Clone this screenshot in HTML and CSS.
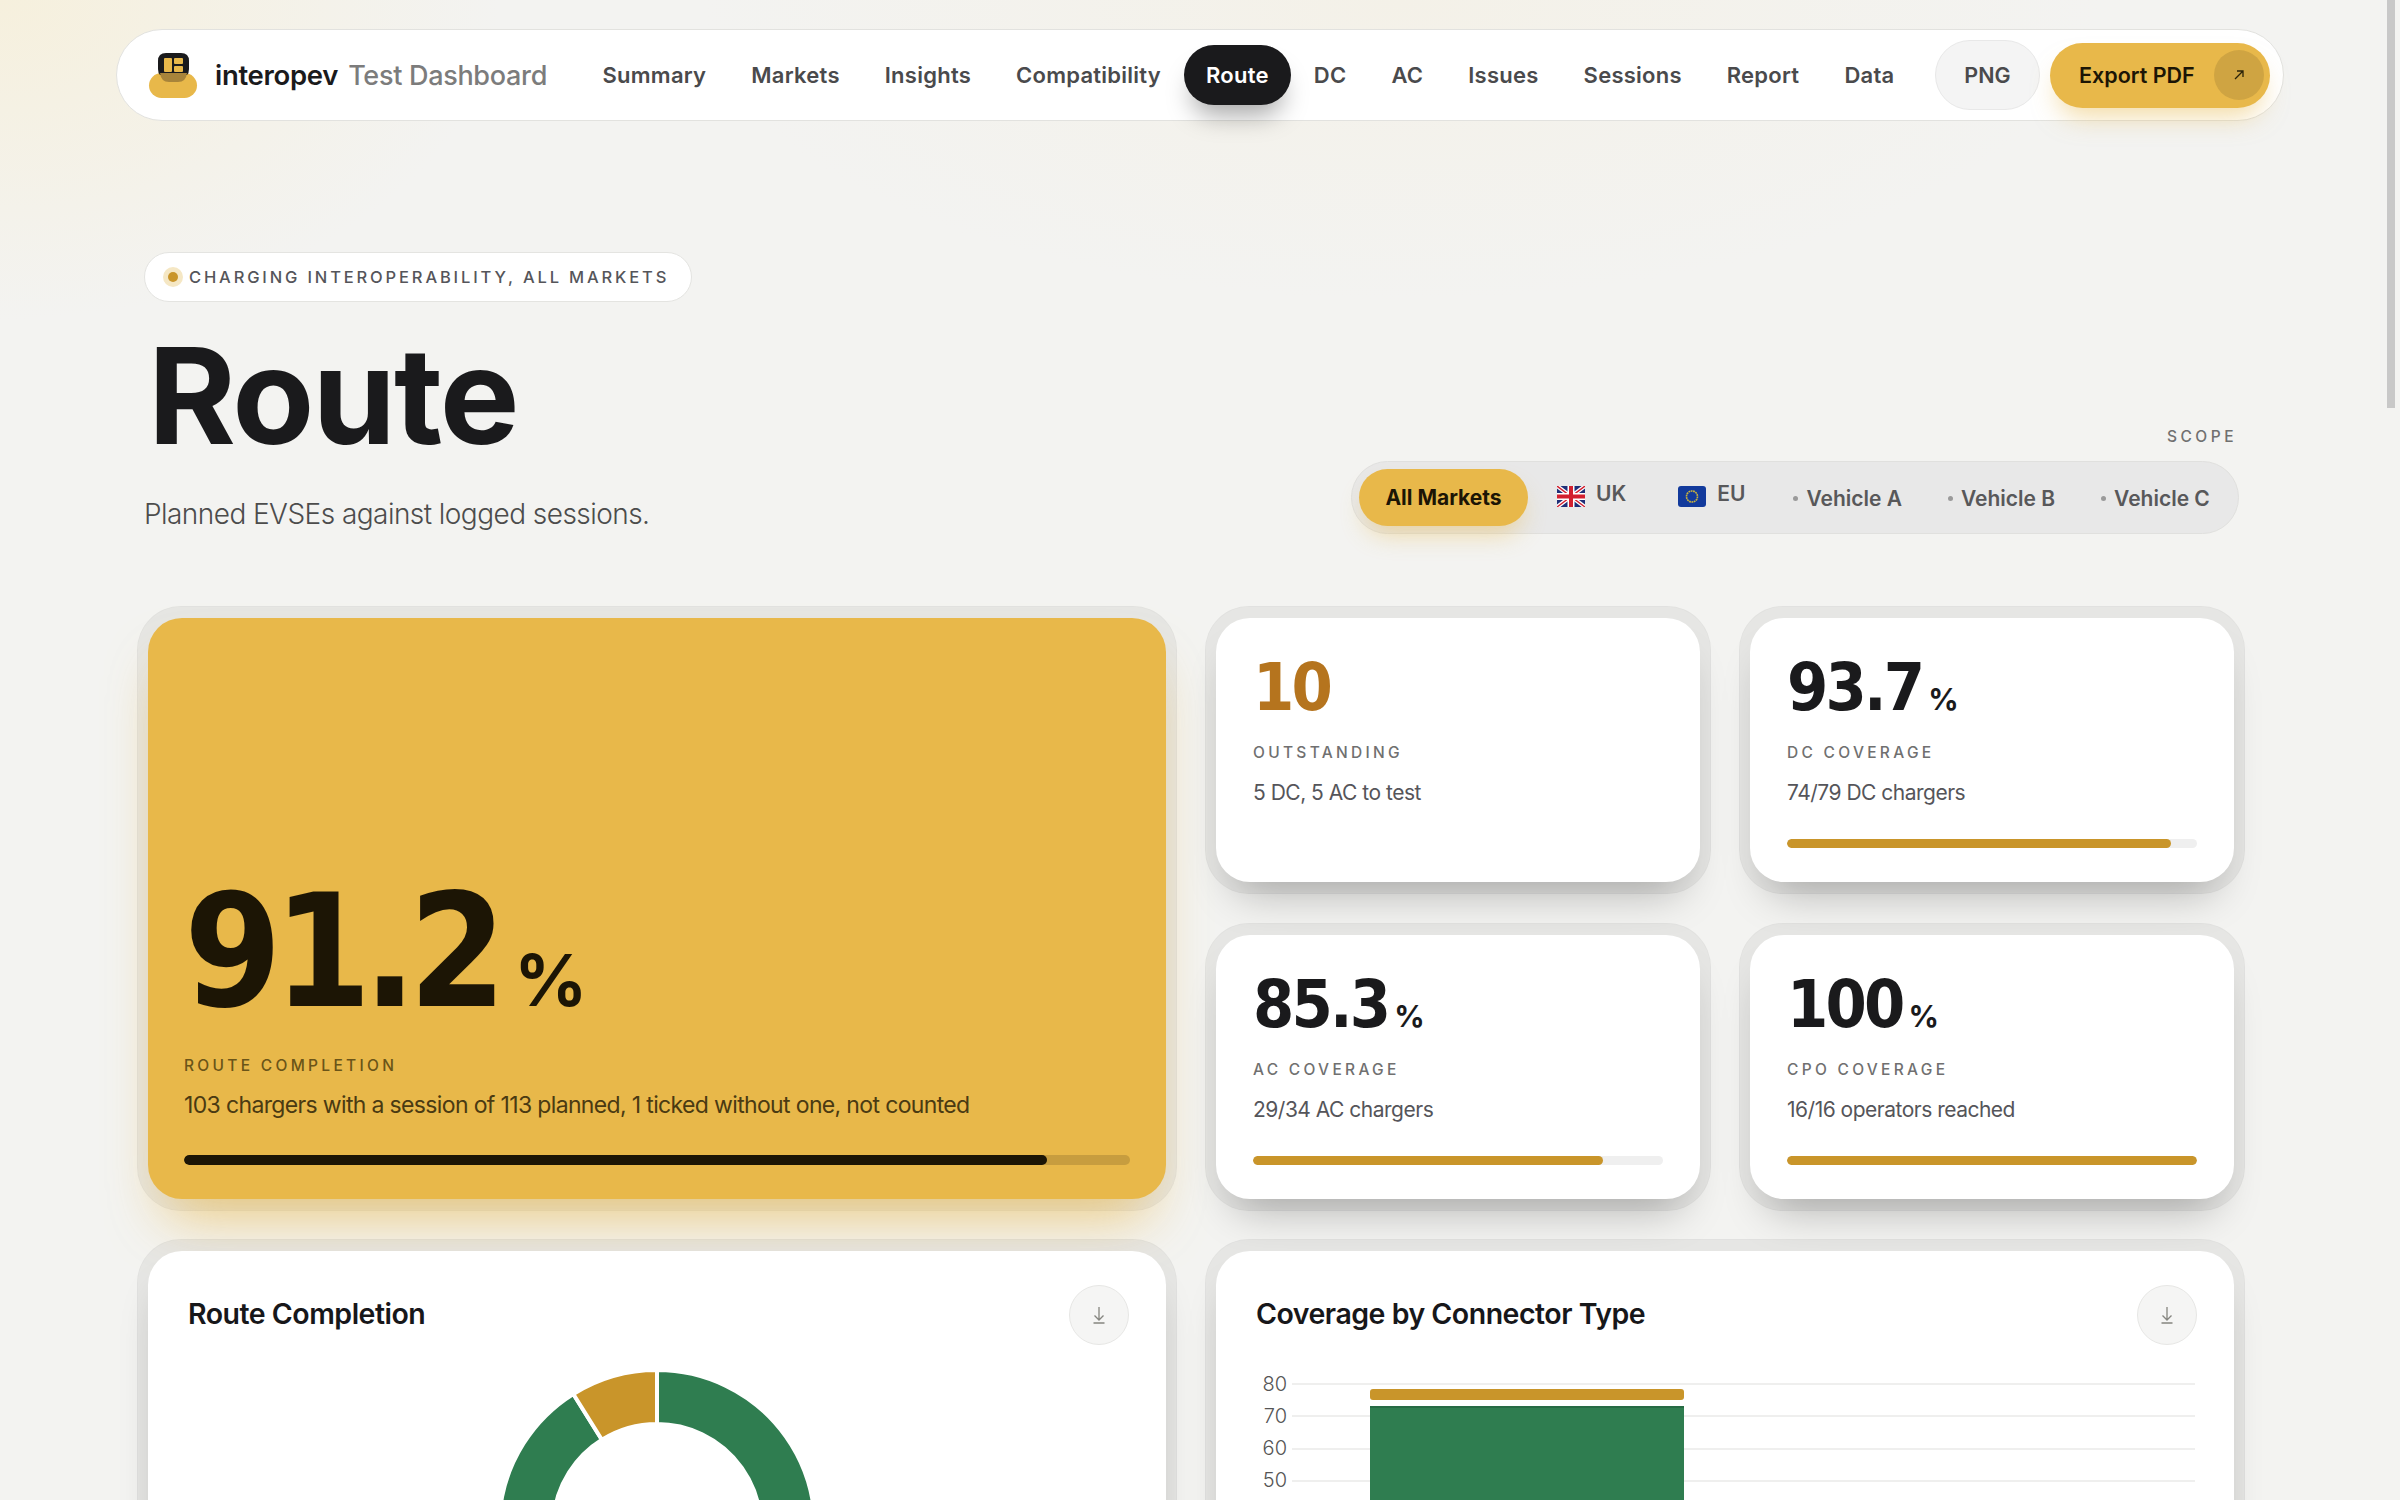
FILE: index.html
```html
<!DOCTYPE html>
<html lang="en">
<head>
    <meta charset="UTF-8">
    <meta name="viewport" content="width=device-width, initial-scale=1.0">
    <title>interopev Test Dashboard</title>
    <link rel="stylesheet" href="styles.css">
</head>
<body>
    <div class="scroll-thumb"></div>

    <header class="navbar">
        <div class="brand">
            <svg class="brand-logo" width="52" height="52" viewBox="0 0 52 52">
                <rect class="logo-base" x="2" y="24" width="48" height="25" rx="12.500"/>
                <path d="M19 4h15q8 0 8 8v8q0 4-2 6H13q-2-2-2-6v-8q0-8 8-8z" fill="#1a1a1c"/>
                <path d="M13 24h27q-1 9-9 9H22q-8 0-9-9z" fill="#a8843a"/>
                <rect x="17" y="9" width="8" height="14" rx="1" fill="#e8b84a"/>
                <rect x="27" y="9" width="9" height="6" rx="1" fill="#e8b84a"/>
                <rect x="27" y="17" width="9" height="6" rx="1" fill="#e8b84a"/>
            </svg>
            <span class="brand-name">interopev</span>
            <span class="brand-sub">Test Dashboard</span>
        </div>
        <nav class="nav-links">
            <a>Summary</a>
            <a>Markets</a>
            <a>Insights</a>
            <a>Compatibility</a>
            <a class="active">Route</a>
            <a>DC</a>
            <a>AC</a>
            <a>Issues</a>
            <a>Sessions</a>
            <a>Report</a>
            <a>Data</a>
        </nav>
        <button class="btn-png">PNG</button>
        <button class="btn-export">
            <span>Export PDF</span>
            <span class="export-arrow">
                <svg width="14" height="14" viewBox="0 0 14 14"><path d="M3 11 11 3M5 3h6v6" fill="none" stroke="#2a2208" stroke-width="1.3"/></svg>
            </span>
        </button>
    </header>

    <main class="container">
        <div class="page-head">
            <div class="title-block">
                <div class="eyebrow"><span class="eyebrow-dot"></span>CHARGING INTEROPERABILITY, ALL MARKETS</div>
                <h1>Route</h1>
                <p class="subtitle">Planned EVSEs against logged sessions.</p>
            </div>
            <div class="scope">
                <div class="scope-label">SCOPE</div>
                <div class="scope-bar">
                    <a class="scope-item active">All Markets</a>
                    <a class="scope-item flag-item">
                        <svg class="flag" width="28" height="21" viewBox="0 0 28 21">
                            <rect width="28" height="21" fill="#1f2f78"/>
                            <path d="M0 0 28 21M28 0 0 21" stroke="#fff" stroke-width="4"/>
                            <path d="M0 0 28 21M28 0 0 21" stroke="#d3202f" stroke-width="1.4"/>
                            <path d="M14 0v21M0 10.5h28" stroke="#fff" stroke-width="7"/>
                            <path d="M14 0v21M0 10.5h28" stroke="#d3202f" stroke-width="4"/>
                        </svg>
                        UK
                    </a>
                    <a class="scope-item flag-item">
                        <svg class="flag" width="28" height="21" viewBox="0 0 28 21">
                            <rect width="28" height="21" rx="3" fill="#123a9c"/>
                            <circle cx="14" cy="10.5" r="5.5" fill="none" stroke="#c9b23c" stroke-width="1.6" stroke-dasharray="1.8 0.6"/>
                        </svg>
                        EU
                    </a>
                    <a class="scope-item vehicle"><span class="scope-dot"></span>Vehicle A</a>
                    <a class="scope-item vehicle"><span class="scope-dot"></span>Vehicle B</a>
                    <a class="scope-item vehicle"><span class="scope-dot"></span>Vehicle C</a>
                </div>
            </div>
        </div>

        <section class="two-col">
            <div class="ring">
                <div class="card hero-card">
                    <div class="hero-value">91.2<span class="unit">%</span></div>
                    <div class="stat-label">ROUTE COMPLETION</div>
                    <div class="stat-desc">103 chargers with a session of 113 planned, 1 ticked without one, not counted</div>
                    <div class="bar"><div class="bar-fill" style="width: 91.2%"></div></div>
                </div>
            </div>

            <div class="stat-grid">
                <div class="ring">
                    <div class="card stat-card">
                        <div class="stat-value outstanding">10</div>
                        <div class="stat-label">OUTSTANDING</div>
                        <div class="stat-desc">5 DC, 5 AC to test</div>
                    </div>
                </div>
                <div class="ring">
                    <div class="card stat-card">
                        <div class="stat-value">93.7<span class="unit">%</span></div>
                        <div class="stat-label">DC COVERAGE</div>
                        <div class="stat-desc">74/79 DC chargers</div>
                        <div class="bar"><div class="bar-fill" style="width: 93.7%"></div></div>
                    </div>
                </div>
                <div class="ring">
                    <div class="card stat-card">
                        <div class="stat-value">85.3<span class="unit">%</span></div>
                        <div class="stat-label">AC COVERAGE</div>
                        <div class="stat-desc">29/34 AC chargers</div>
                        <div class="bar"><div class="bar-fill" style="width: 85.3%"></div></div>
                    </div>
                </div>
                <div class="ring">
                    <div class="card stat-card">
                        <div class="stat-value">100<span class="unit">%</span></div>
                        <div class="stat-label">CPO COVERAGE</div>
                        <div class="stat-desc">16/16 operators reached</div>
                        <div class="bar"><div class="bar-fill" style="width: 100%"></div></div>
                    </div>
                </div>
            </div>
        </section>

        <section class="two-col charts">
            <div class="ring">
                <div class="card chart-card">
                    <div class="chart-head">
                        <h2>Route Completion</h2>
                        <button class="btn-download">
                            <svg width="16" height="20" viewBox="0 0 16 20"><path d="M8 2v13M3.5 10.5 8 15l4.500-4.500M2.500 18h11" fill="none" stroke="#85857f" stroke-width="1.300"/></svg>
                        </button>
                    </div>
                    <div class="donut-wrap">
                        <svg width="320" height="320" viewBox="-160 -158 320 320">
                            <path d="M0 -158A158 158 0 1 1 -83.700 -134L-55.100 -88.200A104 104 0 1 0 0 -104Z" fill="#2f7d50" stroke="#fff" stroke-width="4"/>
                            <path d="M-83.700 -134A158 158 0 0 1 0 -158L0 -104A104 104 0 0 0 -55.100 -88.200Z" fill="#c9952a" stroke="#fff" stroke-width="4"/>
                        </svg>
                    </div>
                </div>
            </div>
            <div class="ring">
                <div class="card chart-card">
                    <div class="chart-head">
                        <h2>Coverage by Connector Type</h2>
                        <button class="btn-download">
                            <svg width="16" height="20" viewBox="0 0 16 20"><path d="M8 2v13M3.5 10.5 8 15l4.500-4.500M2.500 18h11" fill="none" stroke="#85857f" stroke-width="1.300"/></svg>
                        </button>
                    </div>
                    <svg class="bar-chart" width="940" height="140" viewBox="0 0 940 140">
                        <g class="grid-lines">
                            <path d="M36 14H939M36 46H939M36 79H939M36 111H939"/>
                        </g>
                        <g class="axis-labels">
                            <text x="31" y="21">80</text>
                            <text x="31" y="53">70</text>
                            <text x="31" y="85">60</text>
                            <text x="31" y="117">50</text>
                        </g>
                        <rect x="114" y="19" width="314" height="11" rx="3" fill="#c9952a"/>
                        <rect x="114" y="36" width="314" height="104" fill="#2f7d50"/>
                        <rect x="114" y="36" width="314" height="2" fill="#276b44"/>
                    </svg>
                </div>
            </div>
        </section>
    </main>
</body>
</html>
```

FILE: styles.css
```css
html {
    background: #f3f3f1;
}

body {
    margin: 0;
    padding-top: 29px;
    min-height: 5500px;
    font-family: Inter, "Noto Sans", sans-serif;
    color: #1a1a1c;
    background:
        radial-gradient(ellipse 500px 320px at 0 0, #f6f0dd, rgba(246, 240, 221, 0) 100%),
        radial-gradient(ellipse 700px 300px at 1400px 0, #f4f1e8, rgba(244, 241, 232, 0) 100%);
    background-repeat: no-repeat;
}

/* page scroll position */
.scroll-thumb {
    position: fixed;
    top: 0;
    right: 5px;
    width: 8px;
    height: 408px;
    background: #c8c8c8;
}

/* top bar */
.navbar {
    box-sizing: border-box;
    width: 2168px;
    height: 92px;
    margin-left: 116px;
    display: flex;
    align-items: center;
    padding: 0 13px 0 30px;
    background: #fff;
    border: 1px solid #e2e2df;
    border-radius: 46px;
}

.brand {
    display: flex;
    align-items: center;
    width: 433px;
    flex-shrink: 0;
}

.brand-logo {
    margin-right: 16px;
}

.logo-base {
    fill: #e8b84a;
}

.brand-name {
    font-size: 27.5px;
    font-weight: 600;
    letter-spacing: -0.3px;
    margin-right: 10px;
}

.brand-sub {
    font-size: 27px;
    font-weight: 500;
    color: #7c7c7c;
    letter-spacing: -0.3px;
}

.nav-links {
    display: flex;
    align-items: center;
    flex: 1;
}

.nav-links a {
    padding: 0 22.5px;
    height: 60px;
    line-height: 60px;
    font-size: 22px;
    font-weight: 600;
    letter-spacing: 0.25px;
    color: #4a4a4c;
}

.nav-links a.active {
    background: #1a1a1c;
    color: #fff;
    border-radius: 30px;
    box-shadow: 0 18px 26px -8px rgba(0, 0, 0, 0.35);
}

.btn-png {
    box-sizing: border-box;
    width: 105px;
    height: 70px;
    margin-right: 10px;
    background: #f4f4f4;
    border: 1px solid #e8e8e8;
    border-radius: 35px;
    font-family: inherit;
    font-size: 21.5px;
    font-weight: 600;
    color: #4a4a4c;
}

.btn-export {
    box-sizing: border-box;
    width: 220px;
    height: 65px;
    display: flex;
    align-items: center;
    justify-content: space-between;
    padding: 0 6px 0 29px;
    background: #e8b84a;
    border: none;
    border-radius: 33px;
    font-family: inherit;
    font-size: 21.5px;
    font-weight: 600;
    color: #1c1505;
    box-shadow: 0 16px 26px -8px rgba(232, 184, 74, 0.5);
}

.export-arrow {
    width: 50px;
    height: 50px;
    display: flex;
    align-items: center;
    justify-content: center;
    border-radius: 50%;
    background: #cfa442;
}

/* page content */
.container {
    width: 2108px;
    margin-left: 137px;
    padding-top: 131px;
}

.page-head {
    display: flex;
    justify-content: space-between;
    align-items: flex-end;
    height: 354px;
    padding: 0 6px 0 7px;
    box-sizing: border-box;
}

.title-block {
    align-self: flex-start;
}

.eyebrow {
    box-sizing: border-box;
    width: 548px;
    height: 50px;
    display: flex;
    align-items: center;
    padding-left: 17px;
    background: #fff;
    border: 1px solid #e4e4e1;
    border-radius: 25px;
    font-size: 16.5px;
    font-weight: 500;
    letter-spacing: 2.85px;
    color: #55555a;
    white-space: nowrap;
}

.eyebrow-dot {
    width: 10px;
    height: 10px;
    margin-right: 11px;
    border-radius: 50%;
    background: #c9952a;
    box-shadow: 0 0 0 5px #f5e7c4;
    margin-left: 6px;
}

h1 {
    margin: 27px 0 0 4px;
    font-size: 134px;
    line-height: 132px;
    font-weight: 700;
    letter-spacing: -2px;
}

.subtitle {
    margin: 35px 0 0;
    font-size: 28px;
    line-height: 36px;
    font-weight: 300;
    color: #4c4c4c;
    letter-spacing: -0.55px;
}

.scope {
    display: flex;
    flex-direction: column;
    align-items: flex-end;
    margin-bottom: 72px;
}

.scope-label {
    font-size: 15.5px;
    font-weight: 500;
    letter-spacing: 3.5px;
    color: #707070;
    margin: 0 2px 15px 0;
}

.scope-bar {
    box-sizing: border-box;
    width: 888px;
    height: 73px;
    display: flex;
    align-items: center;
    padding-left: 7px;
    background: #e8e8e8;
    border: 1px solid #e0e0de;
    border-radius: 37px;
}

.scope-item {
    font-size: 21px;
    font-weight: 600;
    color: #58585a;
    white-space: nowrap;
}

.scope-item.active {
    box-sizing: border-box;
    width: 169px;
    height: 57px;
    line-height: 57px;
    text-align: center;
    margin-right: 29px;
    background: #e8b84a;
    color: #1c1505;
    font-weight: 700;
    border-radius: 29px;
    box-shadow: 0 14px 24px -6px rgba(232, 184, 74, 0.45);
}

.flag-item {
    display: flex;
    align-items: center;
    gap: 11px;
    margin-bottom: 8px;
    margin-right: 52px;
}

.flag-item + .flag-item {
    margin-right: 48px;
}

.flag {
    position: relative;
    top: 3px;
}

.vehicle {
    display: flex;
    align-items: center;
    margin-top: 2px;
    margin-right: 46px;
}

.vehicle:last-child {
    margin-right: 0;
}

.scope-dot {
    width: 5px;
    height: 5px;
    margin-right: 8px;
    border-radius: 50%;
    background: #9a9a9a;
}

/* cards */
.two-col {
    display: grid;
    grid-template-columns: 1fr 1fr;
    gap: 28px;
}

.charts {
    margin-top: 28px;
}

.stat-grid {
    display: grid;
    grid-template-columns: 1fr 1fr;
    grid-template-rows: 1fr 1fr;
    gap: 29px 28px;
}

.ring {
    box-sizing: border-box;
    display: flex;
    padding: 11px 10px;
    background: rgba(0, 0, 0, 0.05);
    border: 1px solid rgba(0, 0, 0, 0.025);
    border-radius: 44px;
}

.card {
    flex: 1;
    box-sizing: border-box;
    background: #fff;
    border-radius: 34px;
    box-shadow: 0 28px 44px -18px rgba(0, 0, 0, 0.28);
}

.hero-card {
    height: 581px;
    display: flex;
    flex-direction: column;
    justify-content: flex-end;
    padding: 0 36px 34px;
    background: #e8b84a;
    color: #1c1505;
    box-shadow: 0 34px 56px -18px rgba(232, 184, 74, 0.7);
}

.hero-value {
    font-family: "DejaVu Sans Condensed", "DejaVu Sans", sans-serif;
    font-size: 156px;
    line-height: 156px;
    font-weight: 700;
    letter-spacing: -8px;
}

.hero-value .unit {
    font-family: Inter, sans-serif;
    font-size: 72px;
    line-height: 0;
    font-weight: 700;
    letter-spacing: -2px;
    margin-left: 16px;
}

.stat-card {
    height: 264px;
    padding: 30px 37px 0;
}

.stat-value {
    font-family: "DejaVu Sans Condensed", "DejaVu Sans", sans-serif;
    font-size: 66px;
    line-height: 80px;
    font-weight: 700;
    letter-spacing: -2.8px;
}

.stat-value .unit {
    font-family: Inter, sans-serif;
    font-size: 30px;
    line-height: 0;
    font-weight: 700;
    letter-spacing: -1px;
    margin-left: 6px;
}

.stat-value.outstanding {
    color: #b5741e;
}

.stat-label {
    margin-top: 15px;
    font-size: 15.5px;
    line-height: 20px;
    font-weight: 500;
    letter-spacing: 3.3px;
    color: #707070;
}

.stat-desc {
    margin-top: 16px;
    font-size: 21px;
    line-height: 28px;
    color: #55555a;
    letter-spacing: -0.5px;
}

.hero-card .stat-label {
    margin-top: 26px;
    color: #6a5418;
}

.hero-card .stat-desc {
    margin-top: 15px;
    font-size: 23px;
    color: #4a3a12;
    letter-spacing: -0.65px;
}

.bar {
    height: 9px;
    margin-top: 32px;
    background: #efefef;
    border-radius: 5px;
    overflow: hidden;
}

.bar-fill {
    height: 100%;
    background: #c9952a;
    border-radius: 5px;
}

.hero-card .bar {
    height: 10px;
    margin-top: 36px;
    background: rgba(28, 21, 5, 0.16);
}

.hero-card .bar-fill {
    background: #1c1505;
}

.chart-card {
    height: 560px;
    padding: 34px 37px 0 40px;
}

.chart-head {
    display: flex;
    justify-content: space-between;
    align-items: center;
    height: 60px;
    margin-bottom: 25px;
}

h2 {
    margin: 0 0 4px;
    font-size: 28.5px;
    font-weight: 600;
    letter-spacing: -0.5px;
    color: #17171a;
}

.btn-download {
    box-sizing: border-box;
    width: 60px;
    height: 60px;
    display: flex;
    align-items: center;
    justify-content: center;
    padding: 0;
    background: #f5f5f4;
    border: 1px solid #e7e7e5;
    border-radius: 50%;
}

.donut-wrap {
    display: flex;
    justify-content: center;
    margin-left: -3px;
}

.bar-chart {
    display: block;
}

.grid-lines path {
    stroke: #efefee;
    stroke-width: 2;
    fill: none;
}

.axis-labels text {
    font-family: Inter, sans-serif;
    font-size: 20px;
    font-weight: 300;
    fill: #555;
    text-anchor: end;
}
```
